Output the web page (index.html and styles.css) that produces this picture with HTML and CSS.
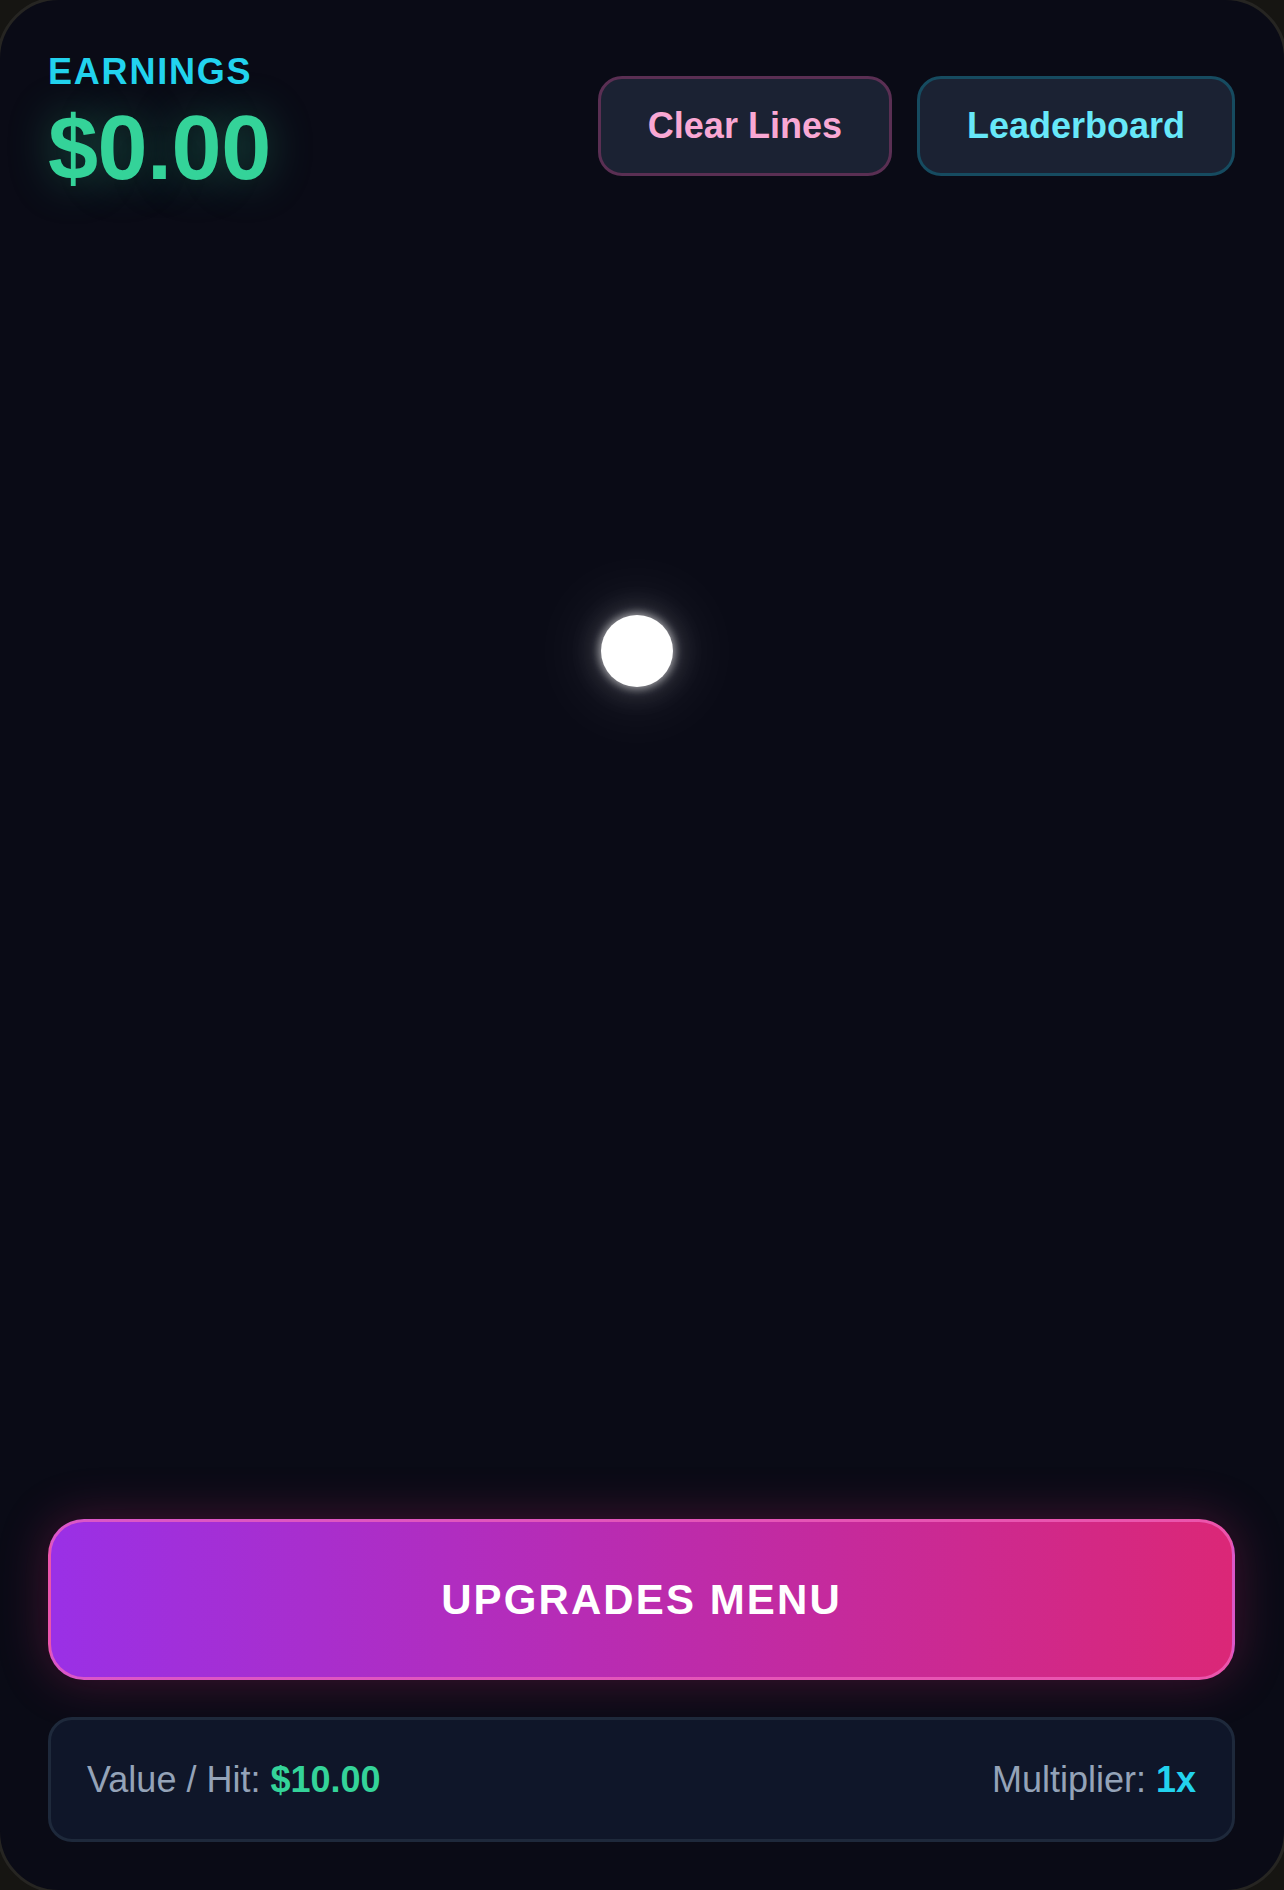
FILE: index.html
```html
<!DOCTYPE html>
<html lang="en">
<head>
<meta charset="utf-8">
<title>Earnings</title>
<link rel="stylesheet" href="styles.css">
</head>
<body>
<div class="app">
  <header class="header">
    <div class="earnings">
      <div class="earnings-label">EARNINGS</div>
      <div class="earnings-value">$0.00</div>
    </div>
    <div class="actions">
      <button class="btn btn-pink">Clear Lines</button>
      <button class="btn btn-cyan">Leaderboard</button>
    </div>
  </header>
  <main class="arena">
    <div class="ball"></div>
  </main>
  <footer class="footer">
    <button class="upgrades">UPGRADES MENU</button>
    <div class="stats">
      <div class="stat">Value / Hit: <span class="green">$10.00</span></div>
      <div class="stat">Multiplier: <span class="cyan">1x</span></div>
    </div>
  </footer>
</div>
</body>
</html>
```
FILE: styles.css
```css
* { box-sizing: border-box; }
html, body {
  margin: 0;
  padding: 0;
  background: #161512;
}
body {
  font-family: "Liberation Sans", Arial, sans-serif;
  width: 1284px;
  height: 1890px;
  overflow: hidden;
}
.app {
  position: relative;
  width: 1290px;
  height: 1896px;
  margin: -3px;
  border: 3px solid #262522;
  border-radius: 62px;
  background: #0a0b16;
  padding: 48px 49px 48px 48px;
  display: flex;
  flex-direction: column;
}
.header {
  display: flex;
  justify-content: space-between;
  align-items: center;
}
.earnings {
  padding-bottom: 4px;
}
.earnings-label {
  color: #22d3ee;
  font-size: 36px;
  line-height: 48px;
  font-weight: 700;
  letter-spacing: 1.8px;
}
.earnings-value {
  color: #34d399;
  font-size: 90px;
  line-height: 104px;
  font-weight: 700;
  letter-spacing: -0.5px;
  text-shadow: 0 0 44px rgba(52, 211, 153, 0.35);
}
.actions {
  display: flex;
  gap: 25px;
}
.btn {
  font-family: "Liberation Sans", Arial, sans-serif;
  font-size: 36px;
  font-weight: 700;
  line-height: 48px;
  padding: 23px 47px;
  border-radius: 24px;
  background: #1b2233;
  border: 3px solid;
  cursor: pointer;
}
.btn-pink {
  color: #f9a8d4;
  border-color: #5a2f53;
}
.btn-cyan {
  color: #67e8f9;
  border-color: #164b60;
}
.arena {
  flex: 1;
}
.ball {
  position: absolute;
  left: 601px;
  top: 615px;
  width: 72px;
  height: 72px;
  border-radius: 50%;
  background: #ffffff;
  box-shadow: 0 0 8px 2px rgba(255, 255, 255, 0.55), 0 0 30px 6px rgba(255, 255, 255, 0.18), 0 0 70px 20px rgba(255, 255, 255, 0.08);
}
.footer {
  display: flex;
  flex-direction: column;
  gap: 37px;
}
.upgrades {
  height: 161px;
  width: 100%;
  border-radius: 36px;
  border: 3px solid rgba(240, 100, 190, 0.75);
  background: linear-gradient(90deg, #9a30e6, #db2777);
  color: #ffffff;
  font-family: "Liberation Sans", Arial, sans-serif;
  font-size: 42px;
  font-weight: 700;
  letter-spacing: 2.1px;
  box-shadow: 0 0 50px rgba(219, 39, 119, 0.28);
  cursor: pointer;
}
.stats {
  height: 125px;
  border: 3px solid #1e293b;
  border-radius: 24px;
  background: #0f1629;
  padding: 0 36px;
  display: flex;
  justify-content: space-between;
  align-items: center;
}
.stat {
  color: #94a3b8;
  font-size: 36px;
  line-height: 48px;
}
.green { color: #34d399; font-weight: 700; }
.cyan { color: #22d3ee; font-weight: 700; }
```
